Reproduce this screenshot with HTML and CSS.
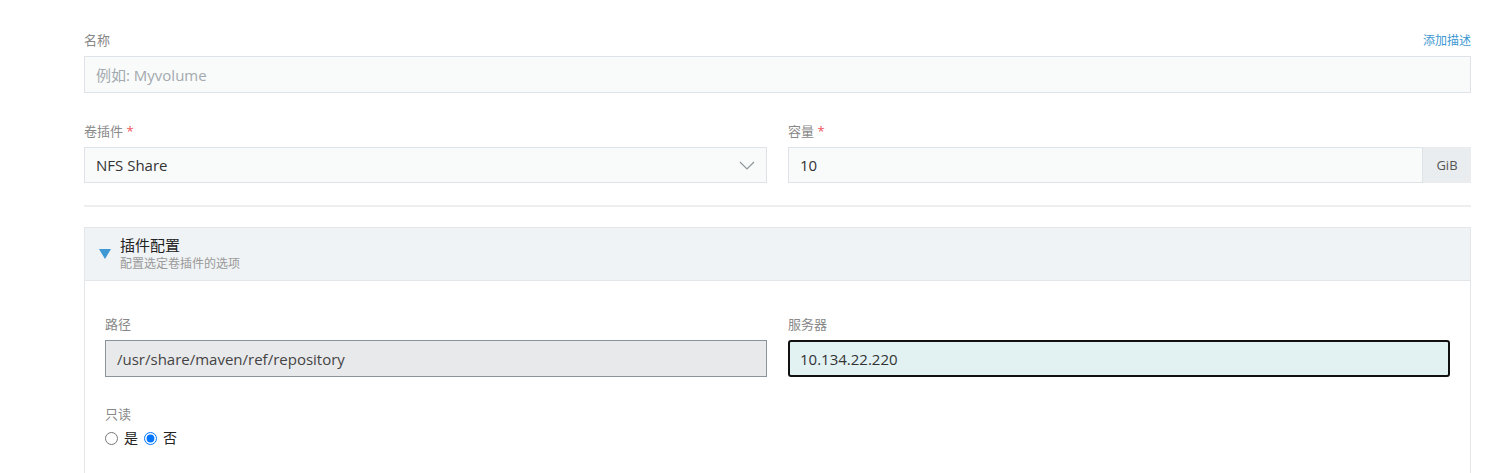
FILE: index.html
```html
<!DOCTYPE html>
<html lang="zh-CN">
<head>
    <meta charset="UTF-8">
    <title>添加持久卷</title>
    <link rel="stylesheet" href="styles.css">
</head>
<body>
    <div class="form">
        <div class="field">
            <div class="label-row">
                <label for="name">名称</label>
                <a class="add-desc" href="#">添加描述</a>
            </div>
            <input id="name" class="input" type="text" placeholder="例如: Myvolume">
        </div>

        <div class="row">
            <div class="field">
                <label for="plugin">卷插件 <span class="req">*</span></label>
                <div class="select">
                    <span>NFS Share</span>
                    <svg class="chevron" width="16" height="9" viewBox="0 0 16 9">
                        <path d="M1 1 L8 8 L15 1" fill="none" stroke="#8e979c" stroke-width="1.2"/>
                    </svg>
                </div>
            </div>
            <div class="field">
                <label for="size">容量 <span class="req">*</span></label>
                <div class="input-group">
                    <input id="size" class="input" type="text" value="10">
                    <span class="addon">GiB</span>
                </div>
            </div>
        </div>

        <hr class="divider">

        <div class="accordion">
            <div class="acc-header">
                <svg class="caret" width="12" height="10" viewBox="0 0 12 10">
                    <path d="M0 0 H12 L6 10 Z" fill="#3d98d3"/>
                </svg>
                <div>
                    <div class="acc-title">插件配置</div>
                    <div class="acc-sub">配置选定卷插件的选项</div>
                </div>
            </div>
            <div class="acc-body">
                <div class="row">
                    <div class="field">
                        <label>路径</label>
                        <input class="input readonly" type="text" value="/usr/share/maven/ref/repository">
                    </div>
                    <div class="field">
                        <label>服务器</label>
                        <input class="input focused" type="text" value="10.134.22.220">
                    </div>
                </div>
                <div class="field">
                    <label>只读</label>
                    <div class="radios">
                        <label class="radio"><input type="radio" name="ro"> 是</label>
                        <label class="radio"><input type="radio" name="ro" checked> 否</label>
                    </div>
                </div>
            </div>
        </div>
    </div>
</body>
</html>
```

FILE: styles.css
```css
body {
    margin: 0;
    background: #fff;
    font-family: "Open Sans", "Noto Sans CJK SC", sans-serif;
    color: #333;
}
.form {
    padding: 31px 27px 0 84px;
}
.field {
    display: flex;
    flex-direction: column;
}
.field label {
    font-size: 13px;
    color: #888;
    line-height: 18px;
    margin-bottom: 7px;
}
.label-row {
    display: flex;
    justify-content: space-between;
    align-items: baseline;
}
.add-desc {
    font-size: 12px;
    color: #3d98d3;
    text-decoration: none;
}
.req {
    color: #f0545c;
}
.input {
    box-sizing: border-box;
    height: 37px;
    padding: 0 11px;
    font-family: "Open Sans", "Noto Sans CJK SC", sans-serif;
    font-size: 15px;
    color: #333;
    background: #f9fbfb;
    border: 1px solid #dde3e6;
    border-radius: 0;
    outline: none;
    width: 100%;
}
.input::placeholder {
    color: #a3a9ae;
}
.row {
    display: grid;
    grid-template-columns: 1fr 1fr;
    gap: 21px;
    margin-top: 29px;
}
.select {
    box-sizing: border-box;
    height: 36px;
    display: flex;
    align-items: center;
    justify-content: space-between;
    padding: 0 11px;
    font-size: 15px;
    background: #f9fbfb;
    border: 1px solid #dde3e6;
}
.input-group {
    display: flex;
}
.input-group .input {
    height: 36px;
}
.addon {
    flex: 0 0 48px;
    display: flex;
    align-items: center;
    justify-content: center;
    font-size: 13px;
    color: #555;
    background: #e9edef;
}
.divider {
    border: 0;
    border-top: 2px solid #eceeef;
    margin: 22px 0 20px;
}
.accordion {
    border: 1px solid #e3e7ea;
    border-bottom: 0;
}
.acc-header {
    display: flex;
    align-items: center;
    gap: 9px;
    height: 52px;
    padding: 0 14px;
    background: #f0f3f5;
    border-bottom: 1px solid #e3e7ea;
}
.acc-title {
    font-size: 15px;
    color: #222;
    line-height: 20px;
    margin-top: -3px;
}
.acc-sub {
    font-size: 12px;
    color: #999;
    line-height: 15px;
    margin-top: 1px;
}
.acc-body {
    padding: 4px 20px 20px;
}
.acc-body .row {
    margin-top: 30px;
}
.readonly {
    background: #e8e9eb;
    border-color: #8a9399;
    color: #444;
}
.focused {
    background: #e2f2f3;
    border: 2px solid #111;
    border-radius: 3px;
    padding-left: 10px;
}
.acc-body > .field {
    margin-top: 28px;
}
.acc-body > .field label {
    margin-bottom: 6px;
}
.radios {
    display: flex;
    gap: 6px;
}
.radios .radio {
    display: flex;
    align-items: center;
    gap: 6px;
    font-size: 14px;
    color: #222;
    margin: 0;
}
.radio input {
    margin: 0;
    width: 13px;
    height: 13px;
}
```
